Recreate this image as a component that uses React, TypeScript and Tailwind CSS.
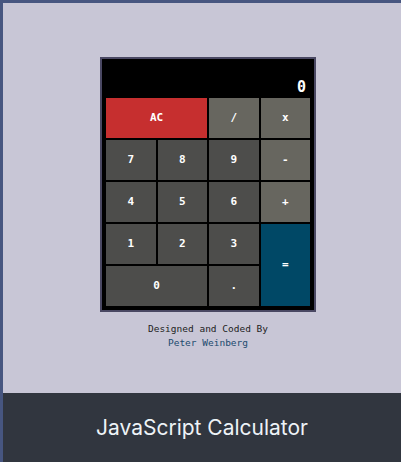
const KEYS: { label: string; cls: string }[] = [
  { label: "AC", cls: "col-span-2 bg-[#c62f2f]" },
  { label: "/", cls: "bg-[#67665f]" },
  { label: "x", cls: "bg-[#67665f]" },
  { label: "7", cls: "bg-[#4d4d4b]" },
  { label: "8", cls: "bg-[#4d4d4b]" },
  { label: "9", cls: "bg-[#4d4d4b]" },
  { label: "-", cls: "bg-[#67665f]" },
  { label: "4", cls: "bg-[#4d4d4b]" },
  { label: "5", cls: "bg-[#4d4d4b]" },
  { label: "6", cls: "bg-[#4d4d4b]" },
  { label: "+", cls: "bg-[#67665f]" },
  { label: "1", cls: "bg-[#4d4d4b]" },
  { label: "2", cls: "bg-[#4d4d4b]" },
  { label: "3", cls: "bg-[#4d4d4b]" },
  { label: "=", cls: "row-span-2 bg-[#004866]" },
  { label: "0", cls: "col-span-2 bg-[#4d4d4b]" },
  { label: ".", cls: "bg-[#4d4d4b]" },
];

export default function App() {
  return (
    <div className="flex min-h-[462px] flex-col border-l-[3px] border-t-[3px] border-[#475680] bg-[#c8c6d6]">
      <main className="h-[390px] pt-[54px] pl-[97px]">
        <div className="w-[216px] border-2 border-[#4a4863] bg-black px-[3px] pb-[3px] font-['DejaVu_Sans_Mono',monospace]">
          <div className="flex h-[38px] items-end justify-end pr-[5px] pb-[2px] text-[15px] font-bold leading-none text-white">0</div>
          <div className="grid grid-cols-4 grid-rows-[repeat(5,42px)]">
            {KEYS.map((k) => (
              <button
                key={k.label}
                className={`${k.cls} flex items-center justify-center border border-black text-[11px] font-bold text-white`}
              >
                {k.label}
              </button>
            ))}
          </div>
        </div>
        <div className="mt-[10px] w-[216px] text-center font-['DejaVu_Sans_Mono',monospace] text-[9.5px] leading-[14px]">
          <p className="text-[#222]">Designed and Coded By</p>
          <p className="text-[#1b4a6e]">Peter Weinberg</p>
        </div>
      </main>
      <footer className="flex h-[69px] items-center justify-center bg-[#31363f] font-['Inter',sans-serif] text-[21px] text-[#eef3f7]">
        JavaScript Calculator
      </footer>
    </div>
  );
}
